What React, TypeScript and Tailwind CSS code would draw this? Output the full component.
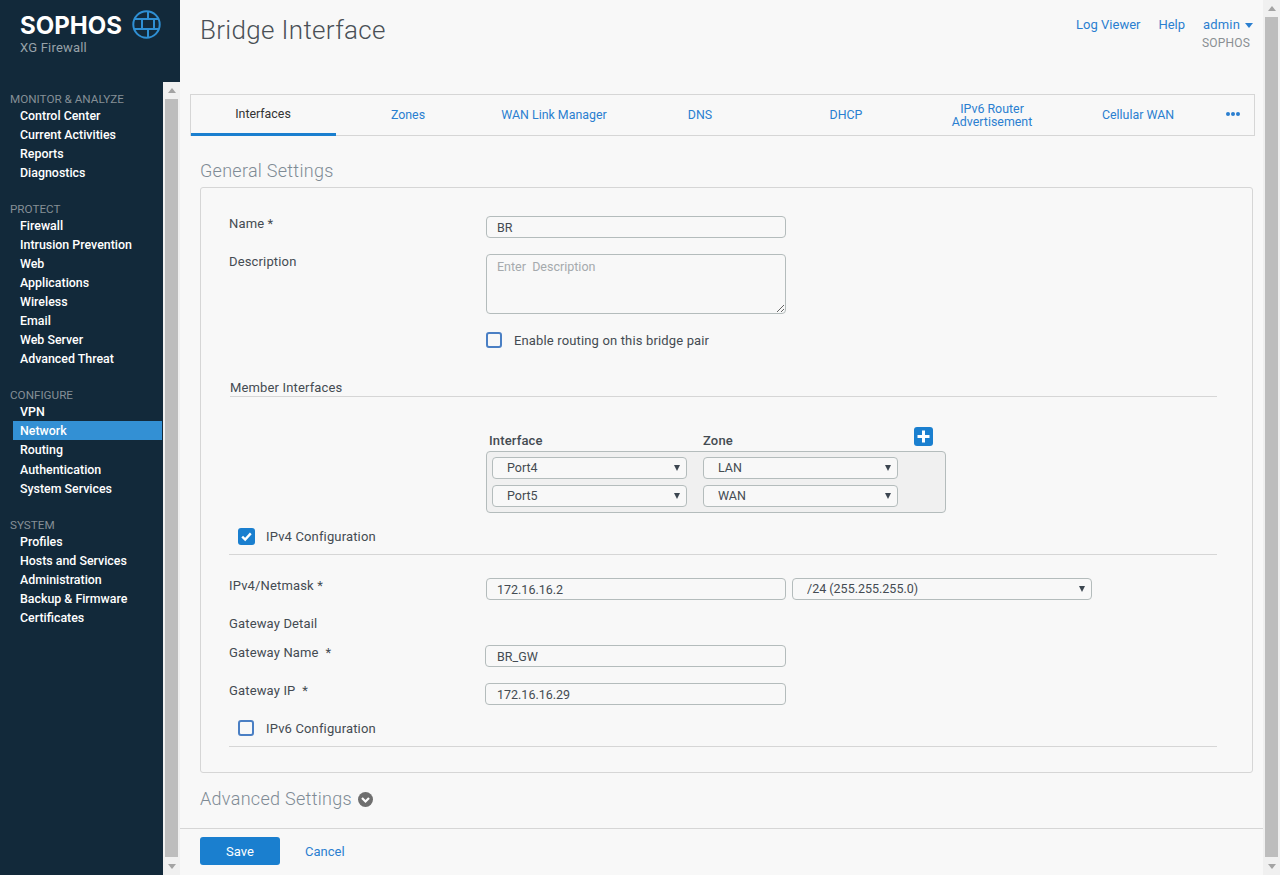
import React from "react";

const sections = [
  { title: "MONITOR & ANALYZE", items: ["Control Center", "Current Activities", "Reports", "Diagnostics"] },
  { title: "PROTECT", items: ["Firewall", "Intrusion Prevention", "Web", "Applications", "Wireless", "Email", "Web Server", "Advanced Threat"] },
  { title: "CONFIGURE", items: ["VPN", "Network", "Routing", "Authentication", "System Services"] },
  { title: "SYSTEM", items: ["Profiles", "Hosts and Services", "Administration", "Backup & Firmware", "Certificates"] },
];

const tabs = ["Zones", "WAN Link Manager", "DNS", "DHCP", "IPv6 Router Advertisement", "Cellular WAN"];

function Scrollbar() {
  return (
    <div className="w-[17px] h-full bg-[#f0f0f0] flex flex-col items-center shrink-0">
      <div className="h-[17px] w-full flex items-center justify-center shrink-0">
        <div className="w-0 h-0 border-l-[4px] border-r-[4px] border-b-[5px] border-l-transparent border-r-transparent border-b-[#a3a3a3]" />
      </div>
      <div className="flex-1 w-[13px] bg-[#bdbdbd]" />
      <div className="h-[18px] w-full flex items-center justify-center shrink-0">
        <div className="w-0 h-0 border-l-[4px] border-r-[4px] border-t-[5px] border-l-transparent border-r-transparent border-t-[#a3a3a3]" />
      </div>
    </div>
  );
}

function Check({ checked, label, className }: { checked?: boolean; label: string; className: string }) {
  return (
    <label className={`flex items-center text-[13px] text-[#444b52] ${className}`}>
      {checked ? (
        <span className="w-[17px] h-[17px] rounded-[3px] bg-[#1a7fcf] flex items-center justify-center shrink-0">
          <svg width="13" height="13" viewBox="0 0 13 13" fill="none">
            <path d="M2.2 6.6 5.2 9.6 10.8 3.4" stroke="#fff" strokeWidth="2.4" />
          </svg>
        </span>
      ) : (
        <span className="w-4 h-4 rounded-[3px] border-2 border-[#4a7fc4] bg-[#f8f8f8] shrink-0" />
      )}
      <span className={`pt-[2px] ${checked ? "ml-[11px]" : "ml-3"}`}>{label}</span>
    </label>
  );
}

const fieldCls =
  "h-[22px] border border-[#b4bcbc] rounded-[4px] bg-[#f8f8f8] text-[12.5px] tracking-normal text-[#444b52] outline-none";

function Sel({ value, w }: { value: string; w: string }) {
  return (
    <div className={`relative ${w}`}>
      <select defaultValue={value} className={`${fieldCls} w-full pl-[14px] appearance-none`}>
        <option>{value}</option>
      </select>
      <span className="absolute right-[7px] top-[8px] w-0 h-0 border-l-[3.5px] border-r-[3.5px] border-t-[6px] border-l-transparent border-r-transparent border-t-[#3c4650]" />
    </div>
  );
}

export default function App() {
  return (
    <div className="w-[1280px] h-[875px] overflow-hidden flex bg-[#f8f8f8] font-['Roboto',sans-serif]">
      <aside className="w-[180px] h-full bg-[#12293a] flex flex-col shrink-0">
        <div className="h-[82px] shrink-0 relative pl-5 pt-[11px]">
          <div className="flex items-center">
            <span className="text-[24px] leading-[29px] font-bold text-white font-['Inter',sans-serif]">SOPHOS</span>
            <svg className="absolute left-[132px] top-[10px]" width="29" height="29" viewBox="0 0 29 29" fill="none" stroke="#2f8fd3" strokeWidth="2">
              <circle cx="14.5" cy="14.5" r="13.2" />
              <path d="M3 9H26M2 19H27M16 1.5V9M10 9V19M22 9V19M16 19V27.5" />
            </svg>
          </div>
          <div className="text-[13px] leading-4 text-[#98a2a9] tracking-[0.2px]">XG Firewall</div>
        </div>
        <div className="flex-1 flex min-h-0">
          <nav className="w-[163px] pt-2 shrink-0">
            {sections.map((s) => (
              <div key={s.title} className="mb-[18px]">
                <div className="h-4 leading-[18px] pl-[10px] text-[11.7px] text-[#858f96] whitespace-nowrap">{s.title}</div>
                {s.items.map((it) => (
                  <div
                    key={it}
                    className={`ml-[13px] w-[149px] pl-[7px] leading-[19px] text-[12.4px] font-medium text-white whitespace-nowrap ${
                      it === "Network" ? "bg-[#3390d4] h-[19px]" : it === "Routing" ? "h-5" : "h-[19px]"
                    }`}
                  >
                    {it}
                  </div>
                ))}
              </div>
            ))}
          </nav>
          <Scrollbar />
        </div>
      </aside>

      <div className="flex-1 flex flex-col min-w-0 h-full">
        <main className="flex-1 min-h-0 pl-[10px] pr-[8px]">
          <header className="h-[94px] flex justify-between">
            <h1 className="pl-[10px] pt-[13px] text-[26px] leading-[34px] text-[#4a5056] font-light tracking-[0.33px]">Bridge Interface</h1>
            <div className="pr-[2px] pt-[17px] text-[13px] leading-4 text-right">
              <div className="flex gap-[18px] text-[#2b7fd0]">
                <span>Log Viewer</span>
                <span>Help</span>
                <span className="flex items-center gap-[5px] tracking-[0.15px]">
                  admin
                  <span className="w-0 h-0 border-l-[4px] border-r-[4px] border-t-[5px] border-l-transparent border-r-transparent border-t-[#2b7fd0]" />
                </span>
              </div>
              <div className="mt-[2px] text-[12px] text-[#8a8f93] tracking-[0.2px] pr-[3px]">SOPHOS</div>
            </div>
          </header>

          <div className="h-[42px] border border-[#d6d6d6] flex items-stretch text-[12.4px] text-[#2b7fd0]">
            <div className="w-[145px] -mr-px border-b-[3px] border-[#1a7fcf] -mb-px text-[#333] flex items-center justify-center pr-[1px]">Interfaces</div>
            {tabs.map((t) => (
              <div key={t} className={`w-[146px] flex items-center justify-center text-center leading-[13px] px-[10px] ${t.startsWith("IPv6") ? "" : "pb-[2px]"}`}>{t}</div>
            ))}
            <div className="flex-1 flex items-center justify-center gap-[1px] pl-[1px] pb-[2px]">
              <span className="w-[4px] h-[4px] rounded-full bg-[#2b7fd0]" />
              <span className="w-[4px] h-[4px] rounded-full bg-[#2b7fd0]" />
              <span className="w-[4px] h-[4px] rounded-full bg-[#2b7fd0]" />
            </div>
          </div>

          <h2 className="pl-[10px] mt-[23px] h-[28px] text-[18px] leading-6 text-[#7f8b95] font-light tracking-[0.27px]">General Settings</h2>

          <section className="ml-[10px] mr-[2px] h-[586px] border border-[#d6d6d6] rounded-[3px] pl-[28px] pr-[35px] pt-[28px] text-[13px] text-[#444b52] tracking-[0.15px]">
            <div className="grid grid-cols-[257px_300px] items-start">
              <span className="-mt-[2px]">Name *</span>
              <input readOnly value="BR" className={`${fieldCls} w-[300px] px-[10px]`} />
            </div>
            <div className="grid grid-cols-[257px_300px] items-start mt-4">
              <span className="-mt-[2px]">Description</span>
              <textarea placeholder="Enter  Description" className="h-[60px] w-[300px] border border-[#b4bcbc] rounded-[4px] bg-[#f8f8f8] text-[12.5px] tracking-normal px-[10px] py-[3px] outline-none placeholder:text-[#a5aaad]" />
            </div>
            <Check label="Enable routing on this bridge pair" className="ml-[257px] mt-[16px] h-[20px]" />

            <div className="mt-[29px] ml-px pb-[1px] border-b border-[#d6d6d6] leading-[17px] h-[18px]">Member Interfaces</div>

            <div className="ml-[257px] w-[460px] mt-[30px] relative">
              <div className="flex h-[24px] items-end pb-[1px] font-medium text-[#444b52] pl-[3px]">
                <span className="w-[214px]">Interface</span>
                <span>Zone</span>
              </div>
              <button className="absolute left-[428px] top-0 w-[19px] h-[19px] rounded-[3px] bg-[#1a7fcf] flex items-center justify-center">
                <svg width="13" height="13" viewBox="0 0 13 13"><path d="M5 0.5H8V5H12.5V8H8V12.5H5V8H0.5V5H5Z" fill="#fff" /></svg>
              </button>
              <div className="h-[62px] border border-[#b4bcbc] rounded-[4px] bg-[#f0f0f0] pl-[5px] pt-[5px] flex flex-col gap-[6px]">
                <div className="flex gap-4">
                  <Sel value="Port4" w="w-[195px]" />
                  <Sel value="LAN" w="w-[195px]" />
                </div>
                <div className="flex gap-4">
                  <Sel value="Port5" w="w-[195px]" />
                  <Sel value="WAN" w="w-[195px]" />
                </div>
              </div>
            </div>

            <Check checked label="IPv4 Configuration" className="ml-[9px] mt-[14px] h-[18px]" />
            <div className="mt-[9px] border-b border-[#d6d6d6]" />

            <div className="grid grid-cols-[257px_300px_300px] items-start mt-[23px]">
              <span className="-mt-[2px]">IPv4/Netmask *</span>
              <input readOnly value="172.16.16.2" className={`${fieldCls} w-[300px] px-[10px]`} />
              <Sel value="/24 (255.255.255.0)" w="w-[300px] ml-[6px]" />
            </div>
            <div className="mt-[15px] leading-[18px]">Gateway Detail</div>
            <div className="grid grid-cols-[257px_301px] items-start mt-[12px]">
              <span className="-mt-[2px]">Gateway Name&nbsp; *</span>
              <input readOnly value="BR_GW" className={`${fieldCls} w-[301px] px-[11px] -ml-[1px]`} />
            </div>
            <div className="grid grid-cols-[257px_301px] items-start mt-4">
              <span className="-mt-[2px]">Gateway IP&nbsp; *</span>
              <input readOnly value="172.16.16.29" className={`${fieldCls} w-[301px] px-[11px] -ml-[1px]`} />
            </div>
            <Check label="IPv6 Configuration" className="ml-[9px] mt-[13px] h-[20px]" />
            <div className="mt-[8px] border-b border-[#d6d6d6]" />
          </section>

          <div className="pl-[10px] mt-[12px] h-[26px] flex items-center text-[18px] text-[#7f8b95] font-light tracking-[0.3px]">
            Advanced Settings
            <svg className="ml-[6px] mt-[3px]" width="15" height="15" viewBox="0 0 15 15">
              <circle cx="7.5" cy="7.5" r="7.5" fill="#6f6f6f" />
              <path d="M4 6 7.5 9.5 11 6" fill="none" stroke="#fff" strokeWidth="2.2" />
            </svg>
          </div>
        </main>

        <footer className="h-[47px] shrink-0 border-t border-[#d6d6d6] flex items-start pl-5 pt-2">
          <button className="w-20 h-7 rounded-[3px] bg-[#1a7fcf] text-white text-[13px] pt-[1px]">Save</button>
          <span className="ml-[25px] mt-[5px] text-[13px] text-[#2b7fd0]">Cancel</span>
        </footer>
      </div>

      <Scrollbar />
    </div>
  );
}
